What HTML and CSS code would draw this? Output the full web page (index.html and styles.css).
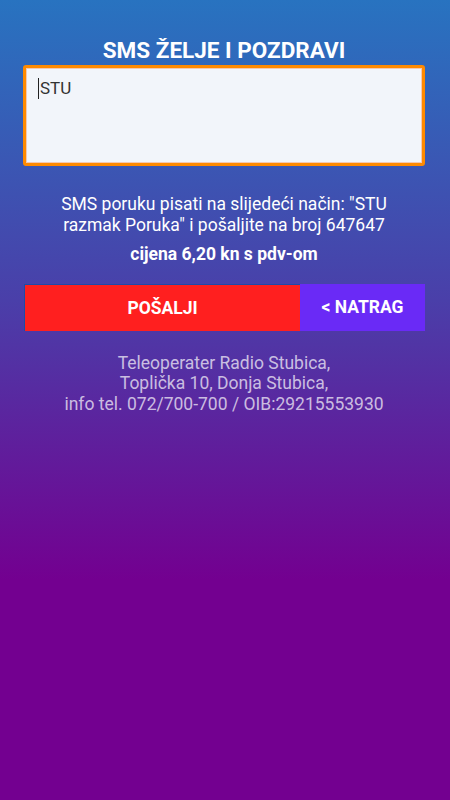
FILE: index.html
```html
<!DOCTYPE html>
<html lang="hr">
<head>
<meta charset="UTF-8" />
<meta name="viewport" content="width=device-width, initial-scale=1" />
<title>SMS želje i pozdravi</title>
<link rel="stylesheet" href="styles.css">
</head>
<body>
<div class="container">
  <h1>SMS ŽELJE I POZDRAVI</h1>
  <div class="message"><span class="caret"></span>STU</div>
  <p class="info">SMS poruku pisati na slijedeći način: "STU razmak Poruka" i pošaljite na broj 647647</p>
  <p class="price">cijena 6,20 kn s pdv-om</p>
  <div class="buttons">
    <div class="btn send">POŠALJI</div>
    <div class="btn back">&lt; NATRAG</div>
  </div>
  <div class="footer">Teleoperater Radio Stubica,<br>Toplička 10, Donja Stubica,<br>info tel. 072/700-700 / OIB:29215553930</div>
</div>
</body>
</html>
```

FILE: styles.css
```css
html, body {
  margin: 0;
  height: 100%;
}
body {
  font-family: Roboto, "Noto Sans", sans-serif;
  color: #ffffff;
  background: linear-gradient(#2873c0 0, #4a3fa9 300px, #730090 580px, #730090 100%);
  min-height: 800px;
}
.container {
  padding: 37px 25px 0 23px;
  text-align: center;
}
h1 {
  font-size: 22.5px;
  font-weight: bold;
  margin: 0 0 2px;
  line-height: 26px;
}
.message {
  border: 3px solid #ff8a00;
  border-radius: 3px;
  background-color: #f2f5fa;
  box-shadow: inset 0 0 0 1px #f6c9b0;
  color: #333;
  text-align: left;
  font-size: 17px;
  line-height: 22px;
  padding: 9px 12px;
  height: 77px;
}
.caret {
  display: inline-block;
  width: 1px;
  height: 21px;
  margin-right: 1px;
  background: #222;
  vertical-align: -5px;
}
.info {
  font-size: 17.5px;
  line-height: 20.5px;
  margin: 28px 30px 0;
}
.price {
  font-size: 17.5px;
  font-weight: bold;
  line-height: 20.5px;
  margin: 9px 0 0;
}
.buttons {
  display: flex;
  margin: 19px 0 0 1px;
  height: 47px;
}
.btn {
  font-size: 17.5px;
  font-weight: bold;
  display: flex;
  align-items: center;
  justify-content: center;
}
.send {
  width: 276px;
  background-color: #ff1f1f;
  border-top: 1px solid #1e4aa8;
  border-left: 1px solid #1e4aa8;
  box-sizing: border-box;
}
.back {
  flex: 1;
  background-color: #6a2af6;
}
.footer {
  font-size: 17.5px;
  line-height: 20.5px;
  color: rgba(255,255,255,0.7);
  margin-top: 22px;
}
```
